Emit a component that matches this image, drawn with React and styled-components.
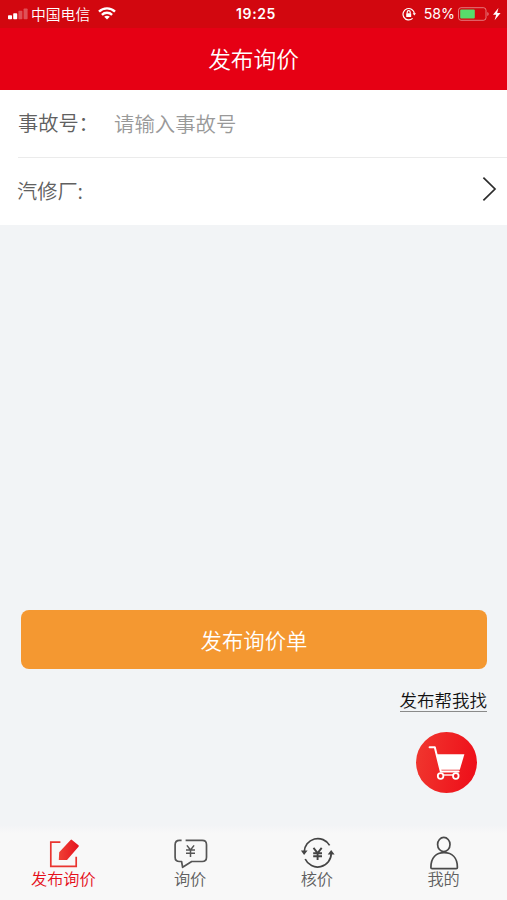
import React, { useState } from 'react'
import styled, { createGlobalStyle } from 'styled-components'

const tabs = [
  { id: 'publish', label: '发布询价', icon: <PublishIcon /> },
  { id: 'inquiry', label: '询价', icon: <InquiryIcon /> },
  { id: 'check', label: '核价', icon: <CheckIcon /> },
  { id: 'mine', label: '我的', icon: <MineIcon /> },
]

export default function App() {
  const [active, setActive] = useState('publish')
  const [accident, setAccident] = useState('')

  return (
    <>
      <GlobalStyle />
      <Screen>
        <StatusBar>
          <StatusLeft>
            <SignalIcon />
            <Carrier>中国电信</Carrier>
            <WifiIcon />
          </StatusLeft>
          <Clock>19:25</Clock>
          <StatusRight>
            <LockIcon />
            <Percent>58%</Percent>
            <BatteryIcon />
          </StatusRight>
        </StatusBar>
        <Header>发布询价</Header>

        <Form>
          <Row $line>
            <Label>事故号：</Label>
            <Input
              placeholder="请输入事故号"
              value={accident}
              onChange={(e) => setAccident(e.target.value)}
            />
          </Row>
          <Row>
            <Label>汽修厂:</Label>
            <ArrowIcon />
          </Row>
        </Form>

        <Actions>
          <SubmitButton>发布询价单</SubmitButton>
          <HelpLink>发布帮我找</HelpLink>
          <CartButton>
            <CartIcon />
          </CartButton>
        </Actions>

        <TabBar>
          {tabs.map((tab) => (
            <Tab key={tab.id} $active={tab.id === active} onClick={() => setActive(tab.id)}>
              {tab.icon}
              <span>{tab.label}</span>
            </Tab>
          ))}
        </TabBar>
      </Screen>
    </>
  )
}

function SignalIcon() {
  return (
    <svg width="20" height="12" viewBox="0 0 20 12" fill="#fff">
      <rect x="0" y="7.3" width="4" height="3.9" rx="0.8" />
      <rect x="5.2" y="5.2" width="4" height="6" rx="0.8" />
      <rect x="10.4" y="2.8" width="4" height="8.4" rx="0.8" opacity="0.3" />
      <rect x="15.6" y="0.4" width="4" height="10.8" rx="0.8" opacity="0.3" />
    </svg>
  )
}

function WifiIcon() {
  return (
    <svg width="18" height="13" viewBox="0 0 18 13" fill="none" stroke="#fff" strokeWidth="2.4">
      <path d="M1 4.6 C5.4 0.3 12.6 0.3 17 4.6" />
      <path d="M3.9 7.8 C6.7 5.1 11.3 5.1 14.1 7.8" />
      <path d="M9 12.6 L6.2 9.7 C7.7 8.4 10.3 8.4 11.8 9.7 Z" fill="#fff" stroke="none" />
    </svg>
  )
}

function LockIcon() {
  return (
    <svg width="14" height="14" viewBox="0 0 14 14" fill="none" stroke="#fff" strokeWidth="1.2">
      <path d="M10.6 11.4 A5.7 5.7 0 1 1 12.4 6.6" />
      <path d="M10.6 6.2 H14 L12.3 8.6 Z" fill="#fff" stroke="none" />
      <rect x="4.2" y="6.2" width="5" height="3.8" rx="0.5" fill="#fff" stroke="none" />
      <path d="M5.2 6.4 V5.2 A1.5 1.5 0 0 1 8.2 5.2 V6.4" />
    </svg>
  )
}

function BatteryIcon() {
  return (
    <svg width="45" height="14" viewBox="0 0 45 14">
      <rect x="0.5" y="0.7" width="27.5" height="12.6" rx="2.6" fill="none" stroke="#fff" strokeOpacity="0.45" />
      <rect x="2.2" y="2.6" width="14.6" height="9" rx="1" fill="#57dc6b" />
      <path d="M29.4 5 C31 5.6 31 8.4 29.4 9 Z" fill="#fff" opacity="0.5" />
      <path d="M40.4 1 L35 7.8 H38.2 L36.6 13.2 L42.6 5.9 H39.2 Z" fill="#fff" />
    </svg>
  )
}

function ArrowIcon() {
  return (
    <svg width="16" height="26" viewBox="0 0 16 26" fill="none" stroke="#2b2b2b" strokeWidth="1.7">
      <path d="M2.4 1.6 L14 13 L2.4 24.4" />
    </svg>
  )
}

function CartIcon() {
  return (
    <svg width="38" height="36" viewBox="0 0 38 36" fill="none" stroke="#fff">
      <path d="M1.6 2.3 H6.8 L12.8 26.6 H30.6" strokeWidth="2" strokeLinecap="round" strokeLinejoin="round" />
      <path d="M8.4 9.2 H36.4 L31.8 24.8 H12.4 Z" fill="#fff" stroke="none" />
      <circle cx="12.6" cy="31" r="2.8" strokeWidth="1.8" />
      <circle cx="27.8" cy="31" r="2.8" strokeWidth="1.8" />
      <path d="M15 30 H25.4" strokeWidth="1.4" />
    </svg>
  )
}

function PublishIcon() {
  return (
    <svg width="36" height="36" viewBox="0 0 36 36">
      <defs>
        <linearGradient id="pen" x1="0" y1="0" x2="1" y2="0">
          <stop offset="0" stopColor="#ef4136" />
          <stop offset="1" stopColor="#e5121c" />
        </linearGradient>
      </defs>
      <path d="M15.4 8.1 H5.8 V32.3 H31.2 V22.7" fill="none" stroke="#e93530" strokeWidth="1.7" />
      <path d="M14.2 18.3 L25.6 5.9 Q26.3 5.2 27 5.9 L33.5 11.3 Q34.2 12 33.5 12.7 L22 25.9 H13.8 Z" fill="url(#pen)" />
    </svg>
  )
}

function InquiryIcon() {
  return (
    <svg width="36" height="36" viewBox="0 0 36 36" fill="none" stroke="#555" strokeWidth="1.7">
      <path d="M9.6 6.3 H7.5 Q3.1 6.3 3.1 10.7 V23.2 Q3.1 27.5 7.5 27.5 H9.6 L10.6 33.3 L19.7 27.5 H30.2 Q34.5 27.5 34.5 23.2 V10.7 Q34.5 6.3 30.2 6.3 H13.6" strokeLinejoin="round" />
      <path d="M14.9 11.4 L18.5 16 L22.1 11.4 M14 16.1 H23 M14 19.2 H23 M18.5 16 V23" strokeWidth="1.5" />
    </svg>
  )
}

function CheckIcon() {
  return (
    <svg width="36" height="36" viewBox="0 0 36 36" fill="none" stroke="#444" strokeWidth="1.7">
      <path d="M5.2 18 A13.6 13.6 0 0 1 30.6 11.4" />
      <path d="M32.2 19 A13.6 13.6 0 0 1 6.2 25" />
      <path d="M1.9 16.6 H8.6 L5.1 21 Z M28.7 20.6 H35.6 L32.2 16 Z" fill="#444" stroke="none" />
      <path d="M14.5 13.9 L18.6 19.1 L22.7 13.9 M14.2 19.2 H23 M14.2 22.3 H23 M18.6 19 V26" strokeWidth="1.9" />
    </svg>
  )
}

function MineIcon() {
  return (
    <svg width="36" height="36" viewBox="0 0 36 36" fill="none" stroke="#4a4a4a" strokeWidth="1.7">
      <ellipse cx="17.8" cy="10.5" rx="6.2" ry="7.1" />
      <path d="M4.9 33.4 C4.9 23.3 10.3 18.7 18 18.7 C25.8 18.7 31.4 23.3 31.4 33.4 Q31.4 34.6 30.2 34.6 H6.1 Q4.9 34.6 4.9 33.4 Z" />
    </svg>
  )
}

const GlobalStyle = createGlobalStyle`
  * {
    box-sizing: border-box;
  }
  body {
    margin: 0;
    font-family: "Noto Sans CJK SC", sans-serif;
  }
  button, input {
    border: 0;
    padding: 0;
    background: none;
    font-family: inherit;
  }
  svg {
    display: block;
    flex: none;
  }
`

const Screen = styled.div`
  display: flex;
  flex-direction: column;
  width: 507px;
  height: 900px;
  background: #f2f4f6;
  overflow: hidden;
`

const StatusBar = styled.div`
  display: grid;
  grid-template-columns: 1fr auto 1fr;
  align-items: center;
  height: 28px;
  padding: 0 4px 1px 8px;
  background: #d2070f;
  color: #fff;
`

const StatusLeft = styled.div`
  display: flex;
  align-items: center;
`

const StatusRight = styled(StatusLeft)`
  justify-content: flex-end;
`

const Carrier = styled.span`
  margin: 0 8px 0 3px;
  font-size: 14.8px;
  font-weight: 350;
  line-height: 26px;
`

const Clock = styled.span`
  margin-left: 1px;
  font-family: Inter, sans-serif;
  font-size: 14px;
  font-weight: 600;
  letter-spacing: 0.6px;
`

const Percent = styled.span`
  margin: 0 3px 0 8px;
  font-family: Inter, sans-serif;
  font-size: 14.2px;
`

const Header = styled.h1`
  height: 62px;
  margin: 0;
  background: #e60014;
  color: #fff;
  font-size: 22.7px;
  font-weight: 350;
  line-height: 62px;
  text-align: center;
`

const Form = styled.div`
  background: #fff;
  padding-left: 17px;
`

const Row = styled.div`
  display: flex;
  align-items: center;
  height: ${({ $line }) => ($line ? '68px' : '67px')};
  margin-left: ${({ $line }) => ($line ? '1px' : '0')};
  padding: 0 10px ${({ $line }) => ($line ? '1px' : '5px')} 0;
  border-bottom: ${({ $line }) => ($line ? '1px solid #ebebeb' : 'none')};
  justify-content: space-between;
`

const Label = styled.label`
  width: 96px;
  color: #606060;
  font-size: 20.2px;
  font-weight: 350;
  line-height: 24px;
  white-space: nowrap;
  ${Row}:last-child & {
    padding-top: 3px;
  }
`

const Input = styled.input`
  flex: 1;
  min-width: 0;
  color: #606060;
  font-size: 20.4px;
  font-weight: 350;
  outline: none;
  &::placeholder {
    color: #999;
  }
`

const Actions = styled.div`
  flex: 1;
  display: flex;
  flex-direction: column;
  justify-content: flex-end;
  align-items: flex-end;
  padding: 0 20px 32px 21px;
`

const SubmitButton = styled.button`
  width: 100%;
  height: 59px;
  padding-bottom: 1px;
  border-radius: 8px;
  background: #f49831;
  color: #fff;
  font-size: 21.4px;
  font-weight: 350;
`

const HelpLink = styled.a`
  margin-top: 20px;
  border-bottom: 1px solid #8a8a8a;
  color: #111;
  font-size: 17.5px;
  font-weight: 350;
  line-height: 22px;
`

const CartButton = styled.button`
  display: flex;
  align-items: center;
  justify-content: center;
  width: 61px;
  height: 61px;
  margin: 20px 10px 0 0;
  border-radius: 50%;
  background: linear-gradient(100deg, #f0382f, #ee0c18);
`

const TabBar = styled.nav`
  display: grid;
  grid-template-columns: repeat(4, 1fr);
  height: 75px;
  background: linear-gradient(#f2f4f6, #f8f8f8 8px);
`

const Tab = styled.button`
  display: flex;
  flex-direction: column;
  align-items: center;
  padding-top: 9px;
  color: ${({ $active }) => ($active ? '#e5101c' : '#606060')};
  font-size: 16.2px;
  font-weight: 350;
  span {
    line-height: 16px;
  }
`
